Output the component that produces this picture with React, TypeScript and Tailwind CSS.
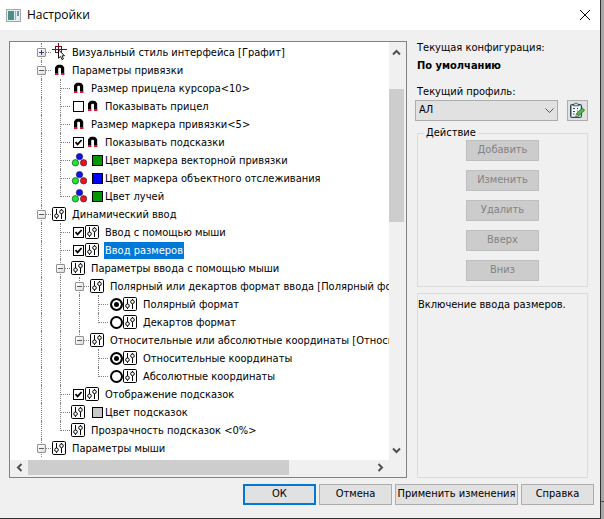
import React, { useState } from "react";
import clsx from "clsx";

type IconName = "style" | "magnet" | "sliders" | "rgb";

interface TreeRow {
  id: string;
  text: string;
  icon: IconName;
  // one letter per 19px column: "|" line, "+" line with branch, "L" last branch, " " empty
  guides: string;
  expander?: "open" | "closed";
  control?: "checkbox" | "radio";
  group?: string;
  checked?: boolean;
  swatch?: string;
}

const ROWS: TreeRow[] = [
  { id: "style", text: "Визуальный стиль интерфейса [Графит]", icon: "style", guides: "+", expander: "closed" },
  { id: "snap", text: "Параметры привязки", icon: "magnet", guides: "+", expander: "open" },
  { id: "aim-size", text: "Размер прицела курсора<10>", icon: "magnet", guides: "|+" },
  { id: "aim-show", text: "Показывать прицел", icon: "magnet", guides: "|+", control: "checkbox" },
  { id: "marker-size", text: "Размер маркера привязки<5>", icon: "magnet", guides: "|+" },
  { id: "hints-show", text: "Показывать подсказки", icon: "magnet", guides: "|+", control: "checkbox", checked: true },
  { id: "color-vector", text: "Цвет маркера векторной привязки", icon: "rgb", guides: "|+", swatch: "bg-[#009600]" },
  { id: "color-object", text: "Цвет маркера объектного отслеживания", icon: "rgb", guides: "|+", swatch: "bg-[#0000ff]" },
  { id: "color-rays", text: "Цвет лучей", icon: "rgb", guides: "|L", swatch: "bg-[#009600]" },
  { id: "dynamic", text: "Динамический ввод", icon: "sliders", guides: "+", expander: "open" },
  { id: "mouse-input", text: "Ввод с помощью мыши", icon: "sliders", guides: "|+", control: "checkbox", checked: true },
  { id: "size-input", text: "Ввод размеров", icon: "sliders", guides: "|+", control: "checkbox", checked: true },
  { id: "mouse-params", text: "Параметры ввода с помощью мыши", icon: "sliders", guides: "|+", expander: "open" },
  { id: "format", text: "Полярный или декартов формат ввода [Полярный формат]", icon: "sliders", guides: "||+", expander: "open" },
  { id: "polar", text: "Полярный формат", icon: "sliders", guides: "|||+", control: "radio", group: "format", checked: true },
  { id: "cartesian", text: "Декартов формат", icon: "sliders", guides: "|||L", control: "radio", group: "format" },
  { id: "coords", text: "Относительные или абсолютные координаты [Относительные координаты]", icon: "sliders", guides: "||L", expander: "open" },
  { id: "relative", text: "Относительные координаты", icon: "sliders", guides: "|| +", control: "radio", group: "coords", checked: true },
  { id: "absolute", text: "Абсолютные координаты", icon: "sliders", guides: "|| L", control: "radio", group: "coords" },
  { id: "hints", text: "Отображение подсказок", icon: "sliders", guides: "|+", control: "checkbox", checked: true },
  { id: "hints-color", text: "Цвет подсказок", icon: "sliders", guides: "|+", swatch: "bg-[#c8c8c8]" },
  { id: "hints-alpha", text: "Прозрачность подсказок <0%>", icon: "sliders", guides: "|L" },
  { id: "mouse", text: "Параметры мыши", icon: "sliders", guides: "+", expander: "open" },
];

const ACTIONS = ["Добавить", "Изменить", "Удалить", "Вверх", "Вниз"];

const RowIcon: React.FC<{ name: IconName }> = ({ name }) => {
  if (name === "magnet") {
    return (
      <svg width="14" height="14" viewBox="0 0 14 14" className="block" aria-hidden="true">
        <path d="M3 12V4.5L4.5 2.5 6 1.8h3l1.8.7L12.2 4.5V12H9V5.6L8.3 4.8H6.9L6.2 5.6V12Z" fill="#000" />
        <path d="M3 10h3.2v2H3zM9 10h3.2v2H9z" fill="#e01030" />
      </svg>
    );
  }
  if (name === "rgb") {
    return (
      <svg width="16" height="14" viewBox="0 0 16 14" className="block" aria-hidden="true">
        <g stroke="#222" strokeWidth="0.6">
          <circle cx="8.5" cy="3.6" r="3.2" fill="#1010f0" />
          <circle cx="4.4" cy="9.8" r="3.2" fill="#10f030" />
          <circle cx="12.6" cy="9.8" r="3.2" fill="#f01020" />
        </g>
      </svg>
    );
  }
  if (name === "style") {
    return (
      <svg width="16" height="18" viewBox="0 0 16 18" className="block" aria-hidden="true">
        <path d="M0 6.5h15M6.5 0v13" stroke="#7a0c18" />
        <rect x="3.5" y="3.5" width="6" height="6" fill="none" stroke="#7a0c18" />
        <path d="M6.5 6.8v8.4l2-1.8 1.5 3.2 1.4-.7-1.4-3.1h2.5z" fill="#fff" stroke="#000" strokeWidth="0.9" />
      </svg>
    );
  }
  return (
    <svg width="14" height="14" viewBox="0 0 14 14" className="block" aria-hidden="true">
      <rect x="0.5" y="0.5" width="13" height="13" rx="1.2" fill="#fff" stroke="#000" />
      <path d="M4.5 2v5M4.5 11v1M9.5 7v5M9.5 2v1" stroke="#000" />
      <circle cx="4.5" cy="8.8" r="1.8" fill="#fff" stroke="#000" />
      <circle cx="9.5" cy="4.8" r="1.8" fill="#fff" stroke="#000" />
    </svg>
  );
};

// One 19px column of the dotted tree lines
const Guide: React.FC<{ kind: string; expander?: "open" | "closed" }> = ({ kind, expander }) => (
  <span className="relative h-[18px] w-[19px] flex-shrink-0">
    {kind !== " " && (
      <span
        className={clsx(
          "absolute left-[9px] top-0 border-l border-dotted border-[#808080]",
          kind === "L" ? "h-[10px]" : "h-[18px]"
        )}
      />
    )}
    {(kind === "+" || kind === "L") && (
      <span className="absolute left-[10px] right-0 top-[9px] border-t border-dotted border-[#808080]" />
    )}
    {expander && (
      <button
        type="button"
        aria-label={expander === "open" ? "Свернуть" : "Развернуть"}
        className="absolute left-[5px] top-[5px] flex h-[9px] w-[9px] items-center justify-center rounded-[1px] border border-[#919191] bg-gradient-to-br from-white to-[#dcdcdc]"
      >
        <svg width="7" height="7" viewBox="0 0 7 7" className="flex-shrink-0" aria-hidden="true">
          <path
            d={expander === "open" ? "M1 3.5h5" : "M1 3.5h5M3.5 1v5"}
            stroke={expander === "open" ? "#5c5c6c" : "#30407c"}
          />
        </svg>
      </button>
    )}
  </span>
);

const TreeItem: React.FC<{ row: TreeRow; selected: boolean; onSelect: () => void }> = ({
  row,
  selected,
  onSelect,
}) => {
  const Tag = row.control ? "label" : "span";
  const columns = row.guides.split("");

  return (
    <li
      role="treeitem"
      aria-selected={selected}
      onClick={onSelect}
      className="flex h-[18px] items-center whitespace-nowrap"
    >
      {columns.map((kind, i) => (
        <Guide key={i} kind={kind} expander={i === columns.length - 1 ? row.expander : undefined} />
      ))}
      <Tag className="flex h-[18px] items-center">
        {row.control === "checkbox" && (
          <span className="relative ml-[3px] mr-px h-[11px] w-[11px]">
            <input
              type="checkbox"
              defaultChecked={row.checked}
              className="peer block h-[11px] w-[11px] appearance-none border border-black bg-white"
            />
            <svg
              className="pointer-events-none absolute inset-0 hidden peer-checked:block"
              width="11" height="11" viewBox="0 0 11 11" aria-hidden="true"
            >
              <path d="M2.5 5.2 4.6 7.4 8.6 3" fill="none" stroke="#000" strokeWidth="1.7" />
            </svg>
          </span>
        )}
        {row.control === "radio" && (
          <input
            type="radio"
            name={row.group}
            defaultChecked={row.checked}
            className="ml-0.5 h-[13px] w-[13px] appearance-none rounded-full border-2 border-black bg-white shadow-[inset_0_0_0_2px_white] checked:bg-black"
          />
        )}
        <span className={clsx("w-[19px] flex-shrink-0", !row.control && "ml-px")}>
          <RowIcon name={row.icon} />
        </span>
        {row.swatch && (
          <span className={clsx("ml-0.5 mr-px h-[11px] w-[11px] border border-black", row.swatch)} />
        )}
        <span className={clsx("px-px leading-[17px]", selected && "bg-[#0078d7] text-white")}>
          {row.text}
        </span>
      </Tag>
    </li>
  );
};

const Arrow: React.FC<{ d: string }> = ({ d }) => (
  <svg width="9" height="9" viewBox="0 0 9 9" fill="none" stroke="#505050" strokeWidth="2" aria-hidden="true">
    <path d={d} />
  </svg>
);

const SettingsTree: React.FC = () => {
  const [selected, setSelected] = useState("size-input");

  return (
    <div className="min-w-0 flex-1 border border-[#828282] bg-[#f0f0f0] pb-0.5 pr-0.5">
      <div className="flex">
        <ul role="tree" aria-label="Настройки" className="min-w-0 flex-1 overflow-hidden bg-white pb-[3px] pl-[22px] pt-px">
          {ROWS.map((row) => (
            <TreeItem
              key={row.id}
              row={row}
              selected={selected === row.id}
              onSelect={() => setSelected(row.id)}
            />
          ))}
        </ul>
        <div className="flex w-[15px] flex-shrink-0 flex-col items-center">
          <button type="button" aria-label="Прокрутить вверх" className="flex h-5 items-center">
            <Arrow d="M1 6.5 4.5 3 8 6.5" />
          </button>
          <div className="flex w-full flex-1 flex-col pt-[27px]">
            <div className="h-[133px] bg-[#cdcdcd]" />
          </div>
          <button type="button" aria-label="Прокрутить вниз" className="flex h-5 items-center">
            <Arrow d="M1 2.5 4.5 6 8 2.5" />
          </button>
        </div>
      </div>
      <div className="flex h-[15px] items-center pr-[15px]">
        <button type="button" aria-label="Прокрутить влево" className="flex w-[18px] justify-center">
          <Arrow d="M6.5 1 3 4.5 6.5 8" />
        </button>
        <div className="h-full flex-1">
          <div className="h-full w-[76%] bg-[#cdcdcd]" />
        </div>
        <button type="button" aria-label="Прокрутить вправо" className="flex w-[18px] justify-center">
          <Arrow d="M2.5 1 6 4.5 2.5 8" />
        </button>
      </div>
    </div>
  );
};

const ProfilePanel: React.FC = () => (
  <div className="flex w-[173px] flex-shrink-0 flex-col">
    <p className="pl-0.5 leading-[14px]">Текущая конфигурация:</p>
    <p className="mt-1 pl-0.5 font-bold leading-[14px]">По умолчанию</p>
    <label htmlFor="profile" className="mt-3 pl-0.5 leading-[14px]">
      Текущий профиль:
    </label>
    <div className="mt-px flex items-center justify-between">
      <div className="relative w-[143px]">
        <select
          id="profile"
          defaultValue="АЛ"
          className="block h-[21px] w-full appearance-none border border-[#adadad] bg-[#e1e1e1] pl-[3px]"
        >
          <option>АЛ</option>
        </select>
        <svg
          className="pointer-events-none absolute right-1 top-[7px]"
          width="9" height="7" viewBox="0 0 9 7" fill="none" stroke="#505050" aria-hidden="true"
        >
          <path d="M.5 1.5l4 4 4-4" />
        </svg>
      </div>
      <button
        type="button"
        aria-label="Редактировать профили"
        className="flex h-[21px] w-[21px] items-center justify-center border border-[#adadad] bg-[#e1e1e1]"
      >
        <svg width="17" height="17" viewBox="0 0 17 17" className="flex-shrink-0" aria-hidden="true">
          <rect x="1.5" y="2.5" width="11" height="13" rx="1" fill="#7fa8a8" stroke="#2c4a50" />
          <rect x="3" y="4" width="8.5" height="10.5" fill="#f4fafa" />
          <path d="M4.5 3.8V2h1.4c.3-1.3 1.9-1.3 2.2 0h1.4v1.8z" fill="#d8e4e4" stroke="#2c4a50" strokeWidth="0.8" />
          <path d="M4 6l1 1 1-1M4 9l1 1 1-1M4 12h1.5M8 6.5h1M8 9h1" fill="none" stroke="#203060" strokeWidth="0.9" />
          <path d="M7.6 11.6L13.4 6l2.2 2.2-5.8 5.6z" fill="#58b848" stroke="#1c6030" strokeWidth="0.8" />
          <path d="M6.6 14.6l1-3 2.2 2.2z" fill="#f0d8a0" stroke="#304030" strokeWidth="0.6" />
        </svg>
      </button>
    </div>

    <fieldset className="ml-0.5 mt-[5px] border border-[#dcdcdc] pb-[5px]">
      <legend className="ml-1.5 px-0.5 leading-[14px]">Действие</legend>
      <div className="flex flex-col items-center gap-[9px]">
        {ACTIONS.map((action) => (
          <button
            key={action}
            type="button"
            disabled
            className="h-[21px] w-[73px] border border-[#bfbfbf] bg-[#cccccc] text-[#838383]"
          >
            {action}
          </button>
        ))}
      </div>
    </fieldset>

    <p className="ml-0.5 mt-1.5 flex-1 border border-[#dcdcdc] pt-1 leading-[14px]">
      Включение ввода размеров.
    </p>
  </div>
);

const DialogButton: React.FC<{ children: React.ReactNode; primary?: boolean; wide?: boolean }> = ({
  children,
  primary,
  wide,
}) => (
  <button
    type="button"
    className={clsx(
      "h-[21px] whitespace-nowrap bg-[#e1e1e1]",
      wide ? "w-[123px]" : "w-[73px]",
      primary ? "border-2 border-[#0078d7]" : "border border-[#adadad]"
    )}
  >
    {children}
  </button>
);

const App: React.FC = () => (
  <div className="flex min-h-screen bg-[#a8a8a8] font-['DejaVu_Sans_Condensed','DejaVu_Sans',sans-serif] text-[11px] text-black">
    <div className="flex min-w-0 flex-1 flex-col border-b border-r border-[#303030] bg-[#f0f0f0]">
      <header className="flex h-[30px] items-center bg-white pl-1.5 pr-[9px]">
        <svg width="15" height="13" viewBox="0 0 15 13" aria-hidden="true">
          <rect x="0.5" y="0.5" width="14" height="12" fill="#e8eef0" stroke="#a0a8ac" />
          <rect x="2" y="2" width="6" height="9" fill="#4a9088" />
          <rect x="9" y="2" width="1" height="9" fill="#9ab0b4" />
          <rect x="11" y="2" width="2" height="5" fill="#7898a8" />
        </svg>
        <h1 className="ml-1.5 flex-1 font-['Open_Sans',sans-serif] text-[12px]">Настройки</h1>
        <button type="button" aria-label="Закрыть">
          <svg width="12" height="12" viewBox="0 0 12 12" stroke="#000" aria-hidden="true">
            <path d="M1 1l10 10M11 1L1 11" />
          </svg>
        </button>
      </header>

      <main className="flex gap-2 pl-[9px] pr-3 pt-[11px]">
        <SettingsTree />
        <ProfilePanel />
      </main>

      <footer className="flex justify-end gap-[3px] pb-3 pr-1.5 pt-1.5">
        <DialogButton primary>ОК</DialogButton>
        <DialogButton>Отмена</DialogButton>
        <DialogButton wide>Применить изменения</DialogButton>
        <DialogButton>Справка</DialogButton>
      </footer>
    </div>
    {/* strip of the window behind, with a red axis line */}
    <div className="flex w-[3px] flex-shrink-0 flex-col justify-end pb-[17px]">
      <div className="h-px bg-[#e01030]" />
    </div>
  </div>
);

export default App;
